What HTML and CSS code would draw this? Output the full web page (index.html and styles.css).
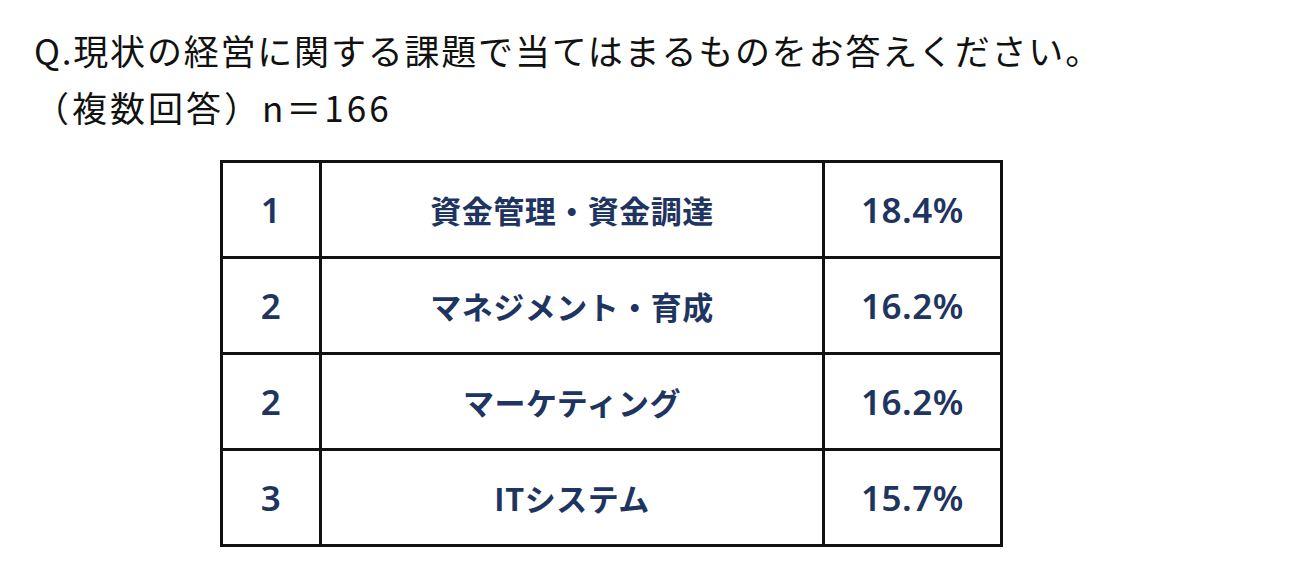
FILE: index.html
```html
<!DOCTYPE html>
<html lang="ja">
<head>
<meta charset="utf-8">
<link rel="stylesheet" href="styles.css">
</head>
<body>
<div class="page">
  <div class="question">
    <p class="q-line">Q.現状の経営に関する課題で当てはまるものをお答えください。</p>
    <p class="q-line sub">（複数回答）n＝166</p>
  </div>
  <div class="ranking">
    <div class="cell rank">1</div>
    <div class="cell item">資金管理・資金調達</div>
    <div class="cell pct">18.4%</div>
    <div class="cell rank">2</div>
    <div class="cell item">マネジメント・育成</div>
    <div class="cell pct">16.2%</div>
    <div class="cell rank">2</div>
    <div class="cell item">マーケティング</div>
    <div class="cell pct">16.2%</div>
    <div class="cell rank">3</div>
    <div class="cell item">ITシステム</div>
    <div class="cell pct">15.7%</div>
  </div>
</div>
</body>
</html>
```

FILE: styles.css
```css
html, body {
  margin: 0;
  padding: 0;
  background: #ffffff;
}

.page {
  width: 1297px;
  height: 586px;
  font-family: "Noto Sans CJK JP", "Noto Sans", sans-serif;
}

.question {
  padding: 21px 0 0 34px;
  color: #111111;
}

.q-line {
  margin: 0;
  font-size: 35px;
  font-weight: 400;
  line-height: 57px;
  height: 57px;
  letter-spacing: 1.8px;
  white-space: nowrap;
}

.q-line.sub {
  letter-spacing: 3px;
}

.ranking {
  margin: 25px 0 0 220px;
  width: 780px;
  display: grid;
  grid-template-columns: 99px 503px 178px;
  grid-auto-rows: 96px;
  border-left: 3px solid #111;
  border-top: 3px solid #111;
}

.cell {
  border-right: 3px solid #111;
  border-bottom: 3px solid #111;
  display: flex;
  align-items: center;
  justify-content: center;
  color: #1e3461;
  font-weight: 700;
  font-size: 31px;
}

.rank,
.pct {
  font-family: "Noto Sans", "Noto Sans CJK JP", sans-serif;
  font-weight: 600;
  font-size: 35px;
  letter-spacing: 0.5px;
}

.item {
  letter-spacing: 0.5px;
}
```
